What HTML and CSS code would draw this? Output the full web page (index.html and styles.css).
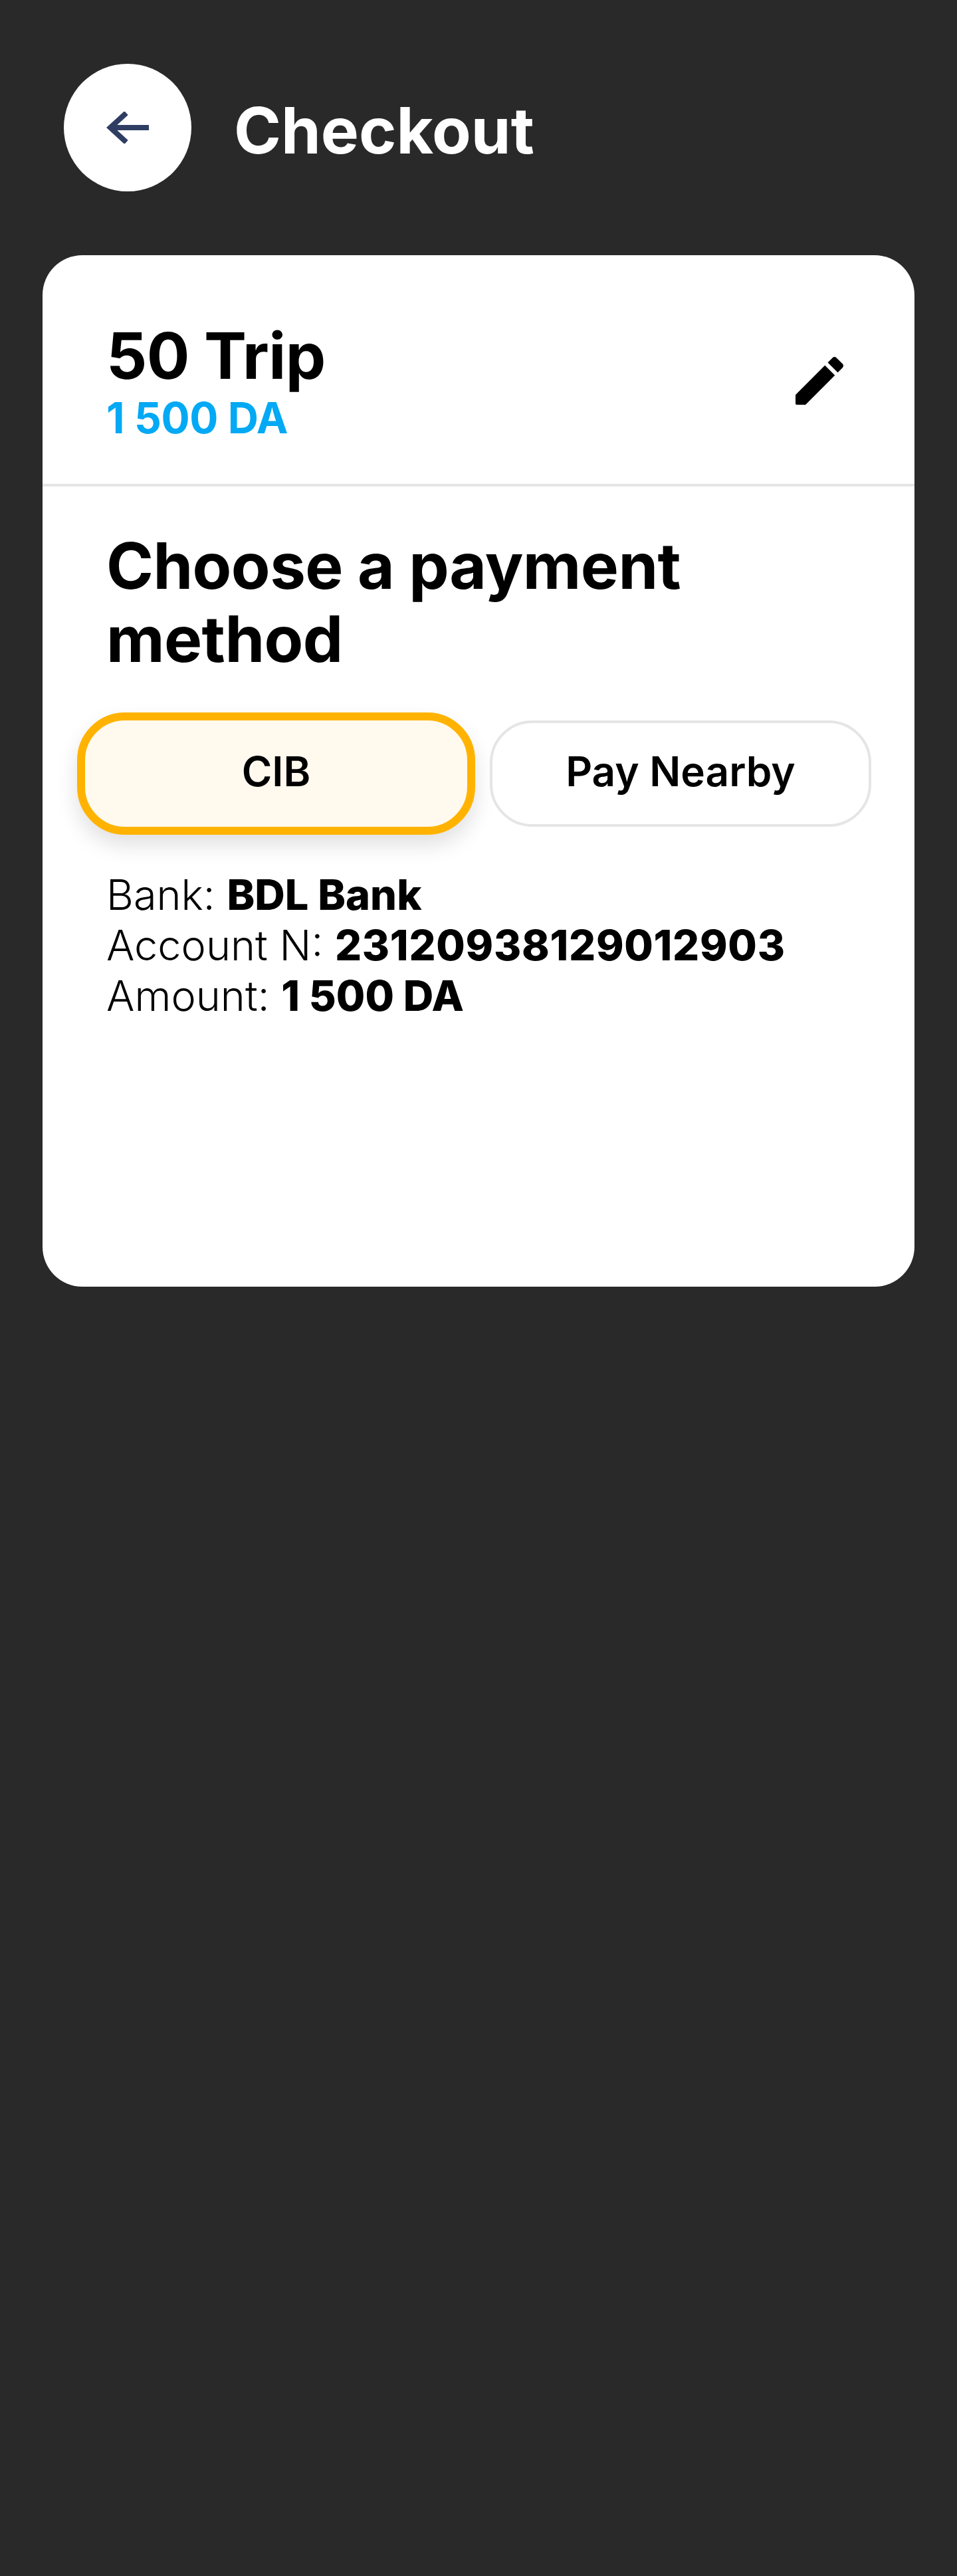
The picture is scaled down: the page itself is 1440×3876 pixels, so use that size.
FILE: index.html
```html
<!DOCTYPE html>
<html lang="en">
<head>
  <meta charset="UTF-8">
  <meta name="viewport" content="width=device-width, initial-scale=1.0">
  <title>Checkout</title>
  <link rel="stylesheet" href="styles.css">
</head>
<body>
  <header class="topbar">
    <button class="back-btn" aria-label="Back">
      <svg class="back-icon" viewBox="0 0 64 48" aria-hidden="true">
        <path d="M64 24H6M30 2 6 24l24 22" />
      </svg>
    </button>
    <h1 class="page-title">Checkout</h1>
  </header>

  <main class="card">
    <div class="plan">
      <div>
        <div class="plan-name">50 Trip</div>
        <div class="plan-price">1 500 DA</div>
      </div>
      <svg class="edit-icon" viewBox="0 0 24 24" aria-hidden="true">
        <path d="M3 17.46v3.04c0 .28.22.5.5.5h3.04c.13 0 .26-.05.35-.15L17.81 9.94l-3.75-3.75L3.15 17.1c-.1.1-.15.22-.15.36zM20.71 7.04c.39-.39.39-1.02 0-1.41l-2.34-2.34c-.39-.39-1.02-.39-1.41 0l-1.83 1.83 3.75 3.75 1.83-1.83z" />
      </svg>
    </div>

    <h2 class="section-title">Choose a payment method</h2>

    <div class="tabs">
      <button class="tab tab-active">CIB</button>
      <button class="tab">Pay Nearby</button>
    </div>

    <div class="details">
      <div>Bank: <b>BDL Bank</b></div>
      <div>Account N: <b class="account-no">23120938129012903</b></div>
      <div>Amount: <b>1 500 DA</b></div>
    </div>
  </main>
</body>
</html>
```

FILE: styles.css
```css
body {
  margin: 0;
  min-height: 3876px;
  background-color: #292929;
  color: #000;
  font-family: Inter, "Liberation Sans", sans-serif;
}

.topbar {
  display: flex;
  align-items: center;
  gap: 64px;
  padding: 96px;
}

.back-btn {
  display: flex;
  align-items: center;
  justify-content: center;
  width: 192px;
  height: 192px;
  padding: 0;
  border: 0;
  border-radius: 50%;
  background-color: #fff;
}

.back-icon {
  width: 64px;
  height: 48px;
  fill: none;
  stroke: #2f3d63;
  stroke-width: 8;
}

.page-title {
  margin: 0 0 -8px;
  color: #fff;
  font-size: 96px;
  font-weight: 700;
  line-height: 112px;
}

.card {
  height: 1552px;
  margin: 0 64px;
  border-radius: 60px;
  background-color: #fff;
  overflow: hidden;
}

.plan {
  display: flex;
  align-items: center;
  justify-content: space-between;
  height: 348px;
  box-sizing: border-box;
  padding: 94px 95px 60px 96px;
  border-bottom: 4px solid #e5e5e5;
}

.plan-name {
  font-size: 96px;
  font-weight: 700;
  letter-spacing: -0.6px;
  line-height: 112px;
}

.plan-price {
  color: #03a9f4;
  font-size: 64px;
  font-weight: 700;
  letter-spacing: -0.4px;
  line-height: 76px;
}

.edit-icon {
  width: 96px;
  height: 96px;
  fill: #000;
}

.section-title {
  margin: 64px 96px 56px;
  font-size: 96px;
  font-weight: 700;
  letter-spacing: -0.6px;
  line-height: 110px;
}

.tabs {
  display: flex;
  align-items: center;
  gap: 22px;
  padding: 0 65px 0 52px;
}

.tab {
  flex: 1;
  height: 160px;
  padding: 0 0 8px;
  border: 4px solid #e5e5e5;
  border-radius: 64px;
  background-color: #fff;
  color: #000;
  font-family: inherit;
  font-size: 62px;
  font-weight: 600;
}

.tab-active {
  flex: none;
  width: 599px;
  height: 184px;
  border: 12px solid #ffb300;
  border-radius: 72px;
  background-color: #fff9ee;
  box-shadow: 0 16px 32px rgba(0, 0, 0, 0.12);
}

.details {
  margin: 52px 96px 0;
  font-size: 63px;
  font-weight: 300;
  line-height: 76px;
}

.details b {
  font-weight: 800;
}

.details .account-no {
  letter-spacing: 0.7px;
}
```
